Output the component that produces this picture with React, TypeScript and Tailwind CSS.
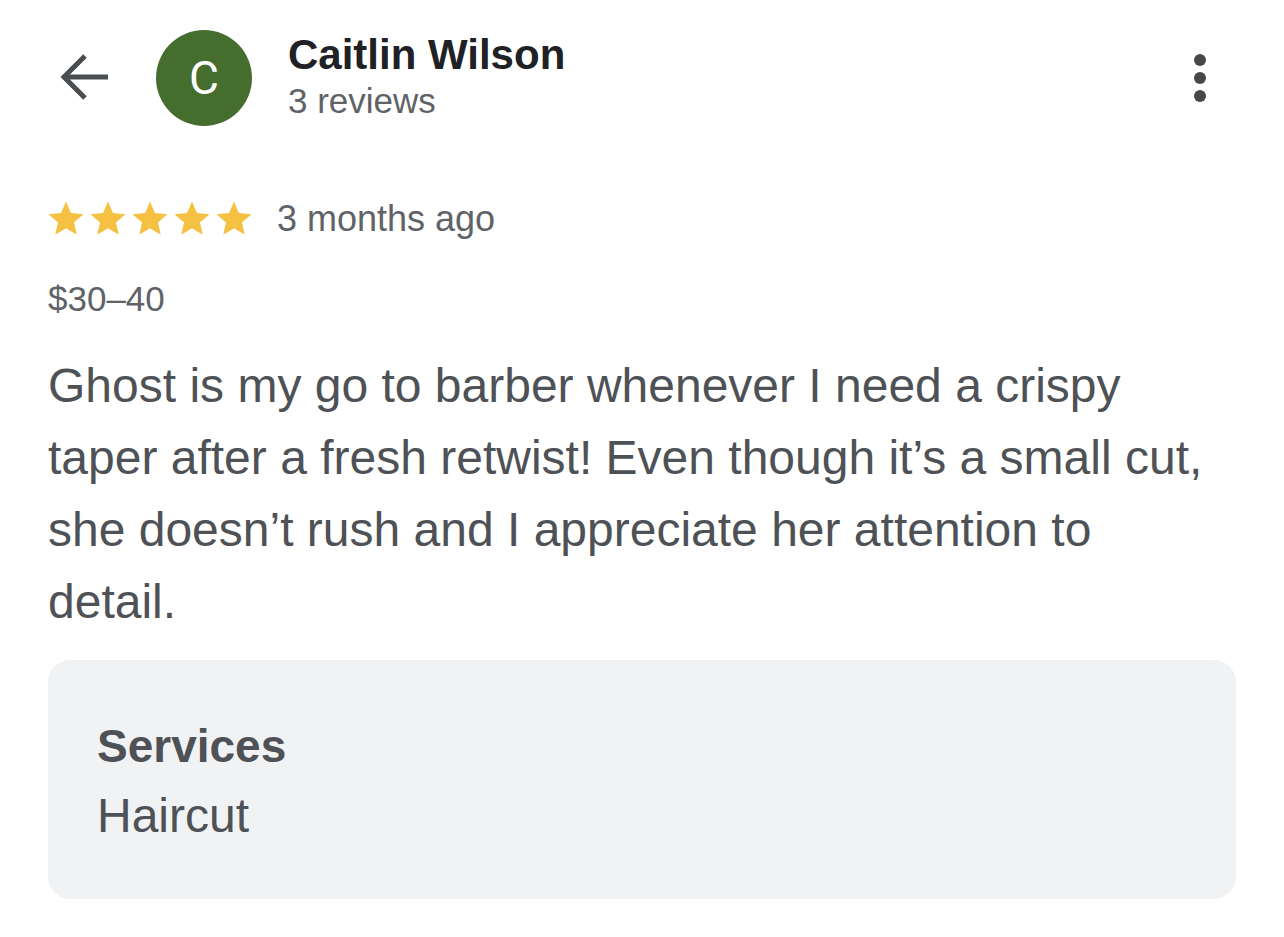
import React from "react";

function Star() {
  return (
    <svg width="42" height="42" viewBox="0 0 24 24" className="shrink-0">
      <path
        fill="#f4c143"
        d="M12 17.27L18.18 21l-1.64-7.03L22 9.24l-7.19-.61L12 2 9.19 8.63 2 9.24l5.46 4.73L5.82 21z"
      />
    </svg>
  );
}

export default function App() {
  return (
    <div
      className="w-[1284px] h-[937px] bg-white overflow-hidden pl-[48px] pr-[48px]"
      style={{ fontFamily: '"Liberation Sans", Arial, sans-serif' }}
    >
      {/* header */}
      <div className="flex items-start pt-[30px]">
        <div className="w-[72px] h-[72px] mt-[12px] shrink-0">
          <svg width="72" height="72" viewBox="0 0 72 72" fill="none">
            <path d="M60 35H18" stroke="#4a4d52" strokeWidth="5" />
            <path d="M37 14L16 35l21 21" stroke="#4a4d52" strokeWidth="5" strokeLinejoin="miter" />
          </svg>
        </div>
        <div
          className="ml-[36px] w-[96px] h-[96px] rounded-full bg-[#456d2e] flex items-center justify-center text-white text-[46px] leading-none shrink-0"
          style={{ fontFamily: "Roboto, sans-serif" }}
        >
          C
        </div>
        <div className="ml-[36px] flex flex-col">
          <div className="text-[42px] font-bold text-[#202124] leading-[48px] mt-[1px]">
            Caitlin Wilson
          </div>
          <div className="text-[35px] text-[#5f6368] leading-[44px]">3 reviews</div>
        </div>
        <div className="ml-auto mt-[24px] mr-[30px] flex flex-col gap-[6px] items-center">
          <span className="w-[12px] h-[12px] rounded-full bg-[#46484c]" />
          <span className="w-[12px] h-[12px] rounded-full bg-[#46484c]" />
          <span className="w-[12px] h-[12px] rounded-full bg-[#46484c]" />
        </div>
      </div>

      {/* rating row */}
      <div className="flex items-center mt-[72px]">
        <div className="flex -ml-[3px]">
          <Star />
          <Star />
          <Star />
          <Star />
          <Star />
        </div>
        <span className="ml-[22px] text-[36px] text-[#5f6368] leading-[40px]">3 months ago</span>
      </div>

      <div className="mt-[39px] text-[35px] text-[#5f6368] leading-[40px]">$30–40</div>

      <p className="mt-[31px] w-[1180px] text-[48px] leading-[72px] text-[#4e5155]">
        Ghost is my go to barber whenever I need a crispy taper after a fresh retwist! Even
        though it’s a small cut, she doesn’t rush and I appreciate her attention to detail.
      </p>

      <div className="mt-[22px] h-[239px] rounded-[22px] bg-[#f1f2f4] px-[49px] pt-[60px]">
        <div className="text-[46px] font-bold text-[#4e5155] leading-[52px]">Services</div>
        <div className="text-[48px] text-[#4e5155] leading-[60px] mt-[14px]">Haircut</div>
      </div>
    </div>
  );
}
